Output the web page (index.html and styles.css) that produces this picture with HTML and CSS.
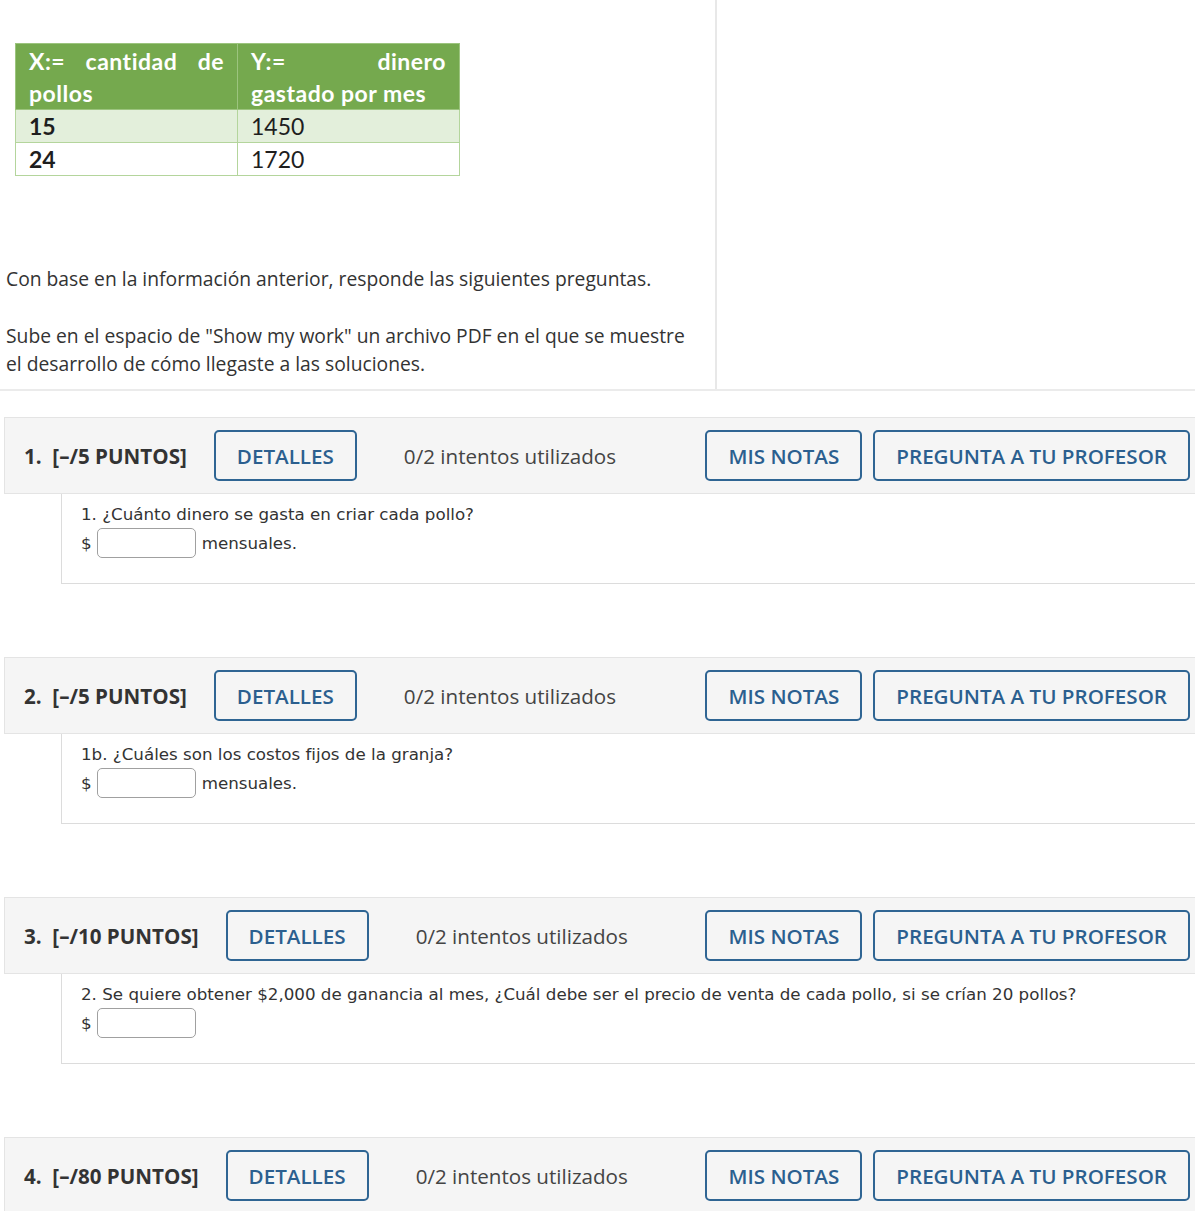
FILE: index.html
```html
<!DOCTYPE html>
<html lang="es">
<head>
<meta charset="utf-8">
<link rel="stylesheet" href="styles.css">
</head>
<body>
<div class="intro">
  <div class="intro-main">
    <table class="data">
      <tr class="head">
        <td class="c1">X:= cantidad de pollos</td>
        <td class="c2">Y:= dinero gastado por mes</td>
      </tr>
      <tr class="r1">
        <td class="num">15</td>
        <td>1450</td>
      </tr>
      <tr class="r2">
        <td class="num">24</td>
        <td>1720</td>
      </tr>
    </table>
    <p class="intro-p first">Con base en la información anterior, responde las siguientes preguntas.</p>
    <p class="intro-p">Sube en el espacio de "Show my work" un archivo PDF en el que se muestre el desarrollo de cómo llegaste a las soluciones.</p>
  </div>
  <div class="intro-side"></div>
</div>

<div class="question">
  <div class="q-head">
    <span class="q-label">1.&nbsp; [–/5 PUNTOS]</span>
    <span class="btn details">DETALLES</span>
    <span class="attempts">0/2 intentos utilizados</span>
    <div class="q-actions">
      <span class="btn">MIS NOTAS</span>
      <span class="btn">PREGUNTA A TU PROFESOR</span>
    </div>
  </div>
  <div class="q-body">
    <div class="q-text">1. ¿Cuánto dinero se gasta en criar cada pollo?</div>
    <div class="q-answer"><span>$</span><span class="inp"></span><span>mensuales.</span></div>
  </div>
</div>

<div class="question">
  <div class="q-head">
    <span class="q-label">2.&nbsp; [–/5 PUNTOS]</span>
    <span class="btn details">DETALLES</span>
    <span class="attempts">0/2 intentos utilizados</span>
    <div class="q-actions">
      <span class="btn">MIS NOTAS</span>
      <span class="btn">PREGUNTA A TU PROFESOR</span>
    </div>
  </div>
  <div class="q-body">
    <div class="q-text">1b. ¿Cuáles son los costos fijos de la granja?</div>
    <div class="q-answer"><span>$</span><span class="inp"></span><span>mensuales.</span></div>
  </div>
</div>

<div class="question">
  <div class="q-head">
    <span class="q-label">3.&nbsp; [–/10 PUNTOS]</span>
    <span class="btn details">DETALLES</span>
    <span class="attempts">0/2 intentos utilizados</span>
    <div class="q-actions">
      <span class="btn">MIS NOTAS</span>
      <span class="btn">PREGUNTA A TU PROFESOR</span>
    </div>
  </div>
  <div class="q-body">
    <div class="q-text">2. Se quiere obtener $2,000 de ganancia al mes, ¿Cuál debe ser el precio de venta de cada pollo, si se crían 20 pollos?</div>
    <div class="q-answer"><span>$</span><span class="inp"></span></div>
  </div>
</div>

<div class="question">
  <div class="q-head">
    <span class="q-label">4.&nbsp; [–/80 PUNTOS]</span>
    <span class="btn details">DETALLES</span>
    <span class="attempts">0/2 intentos utilizados</span>
    <div class="q-actions">
      <span class="btn">MIS NOTAS</span>
      <span class="btn">PREGUNTA A TU PROFESOR</span>
    </div>
  </div>
  <div class="q-body">
    <div class="q-text">&nbsp;</div>
  </div>
</div>
</body>
</html>
```

FILE: styles.css
```css
html {
  overflow: hidden;
}
body {
  margin: 0;
  background: #ffffff;
  font-family: "Open Sans", "Liberation Sans", sans-serif;
  color: #333333;
}

.intro {
  display: flex;
  border-bottom: 2px solid #ebebeb;
}
.intro-main {
  width: 694px;
  padding: 43px 15px 11px 6px;
  border-right: 2px solid #e8e8e8;
}
.intro-side {
  flex: 1;
}

.data {
  border-collapse: collapse;
  margin-left: 9px;
  width: 445px;
  table-layout: fixed;
  font-family: Lato, "Open Sans", sans-serif;
  font-size: 23px;
  color: #1e1e1e;
}
.data td {
  border: 1px solid #b4d59c;
  padding: 0 13px;
  line-height: 32px;
  vertical-align: top;
}
.data .head td {
  background: #75a94e;
  color: #ffffff;
  font-weight: 700;
  text-align: justify;
  text-align-last: left;
  letter-spacing: 0.5px;
  border-color: #9cc47e;
  padding-top: 1px;
}
.data .r1 td {
  background: #e3efdb;
}
.data .num {
  font-weight: 700;
}

.intro-p {
  margin: 0;
  font-size: 19.3px;
  line-height: 28px;
  color: #333333;
}
.intro-p.first {
  margin-top: 89px;
  margin-bottom: 29px;
}

.question {
  margin-top: 26px;
}
.question + .question {
  margin-top: 73px;
}
.q-head {
  display: flex;
  align-items: center;
  margin-left: 4px;
  margin-right: -20px;
  padding: 12px 24px 12px 19px;
  background: #f5f5f5;
  border: 1px solid #e4e4e4;
}
.q-label {
  font-size: 20.6px;
  font-weight: 700;
  color: #333333;
  white-space: nowrap;
}
.btn {
  display: inline-flex;
  align-items: center;
  height: 47px;
  padding: 0 21px;
  border: 2px solid #2f6593;
  border-radius: 5px;
  color: #2b5f8f;
  font-size: 20.6px;
  font-weight: 600;
  white-space: nowrap;
}
.details {
  margin-left: 27px;
}
.attempts {
  margin-left: 47px;
  font-size: 20.6px;
  color: #444444;
  white-space: nowrap;
}
.q-actions {
  margin-left: auto;
  display: flex;
  gap: 11px;
}

.q-body {
  margin-left: 61px;
  margin-right: -20px;
  padding: 10px 20px 25px 19px;
  border-left: 1px solid #dcdcdc;
  border-bottom: 1px solid #dcdcdc;
  font-family: "DejaVu Sans", Verdana, sans-serif;
  font-size: 16.7px;
  color: #333333;
}
.q-text {
  line-height: 20px;
}
.q-answer {
  display: flex;
  align-items: center;
  margin-top: 4px;
  height: 30px;
}
.inp {
  display: inline-block;
  width: 97px;
  height: 28px;
  margin: 0 6px 0 5px;
  border: 1px solid #a0a0a0;
  border-radius: 5px;
  background: #ffffff;
}
```
